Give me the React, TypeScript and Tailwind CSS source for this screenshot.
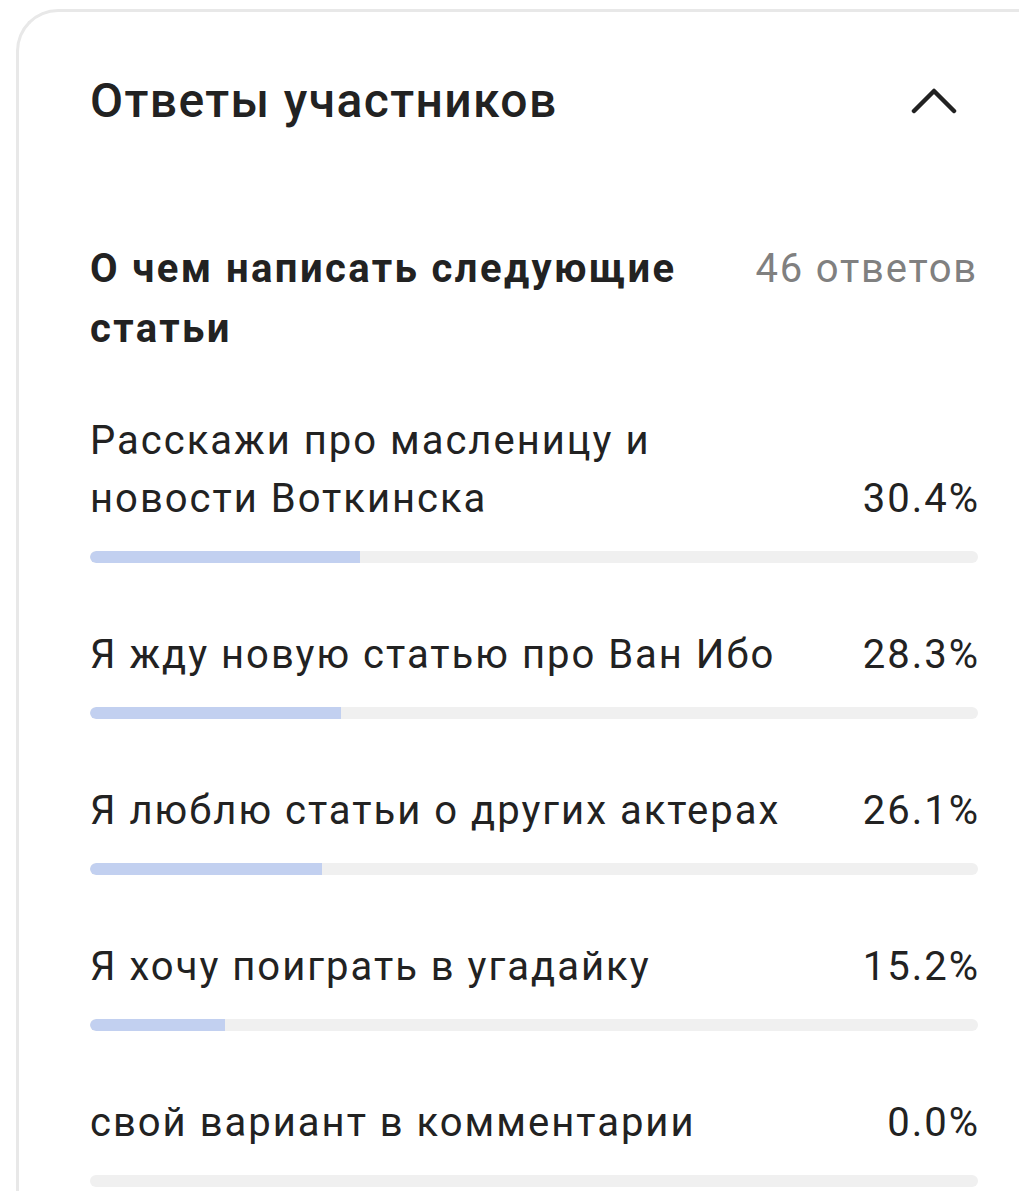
const OPTIONS = [
  { label: 'Расскажи про масленицу и новости Воткинска', pct: 30.4 },
  { label: 'Я жду новую статью про Ван Ибо', pct: 28.3 },
  { label: 'Я люблю статьи о других актерах', pct: 26.1 },
  { label: 'Я хочу поиграть в угадайку', pct: 15.2 },
  { label: 'свой вариант в комментарии', pct: 0.0 },
];

export default function App() {
  return (
    <div
      className="w-[1019px] h-[1191px] overflow-hidden bg-white text-[#222222]"
      style={{ fontFamily: 'Roboto, "Noto Sans", sans-serif' }}
    >
      <div className="ml-[16px] mt-[9px] w-[1100px] min-h-[1300px] border-[3px] border-r-0 border-b-0 border-[#e8e8e8] rounded-tl-[42px] pt-[61px] pl-[71px]">
        <div className="w-[888px]">
          <div className="flex items-center justify-between">
            <h2 className="text-[48px] leading-[56px] font-medium tracking-[1.4px]">Ответы участников</h2>
            <svg className="mr-[21px] w-[46px] h-[26px]" viewBox="0 0 46 26" fill="none">
              <path
                d="M3 23L23 3L43 23"
                stroke="#222222"
                strokeWidth={4.5}
                strokeLinecap="round"
                strokeLinejoin="round"
              />
            </svg>
          </div>

          <div className="mt-[110px] flex justify-between gap-6">
            <div className="w-[620px] text-[40px] leading-[60px] font-bold tracking-[2.4px]">
              О чем написать следующие статьи
            </div>
            <div className="text-[40px] leading-[60px] text-[#808080] tracking-[1.8px]">46 ответов</div>
          </div>

          <div className="mt-[53px] flex flex-col gap-[63px]">
            {OPTIONS.map((o) => (
              <div key={o.label}>
                <div className="flex items-end justify-between gap-6 text-[40px] leading-[58px] tracking-[2px]">
                  <div className="max-w-[720px]">{o.label}</div>
                  <div className="shrink-0 mr-[-2px]">{o.pct.toFixed(1)}%</div>
                </div>
                <div className="mt-[23px] h-[12px] rounded-full bg-[#f0f0f0] overflow-hidden">
                  <div className="h-full rounded-l-full bg-[#c2d0f0]" style={{ width: `${o.pct}%` }} />
                </div>
              </div>
            ))}
          </div>
        </div>
      </div>
    </div>
  );
}
